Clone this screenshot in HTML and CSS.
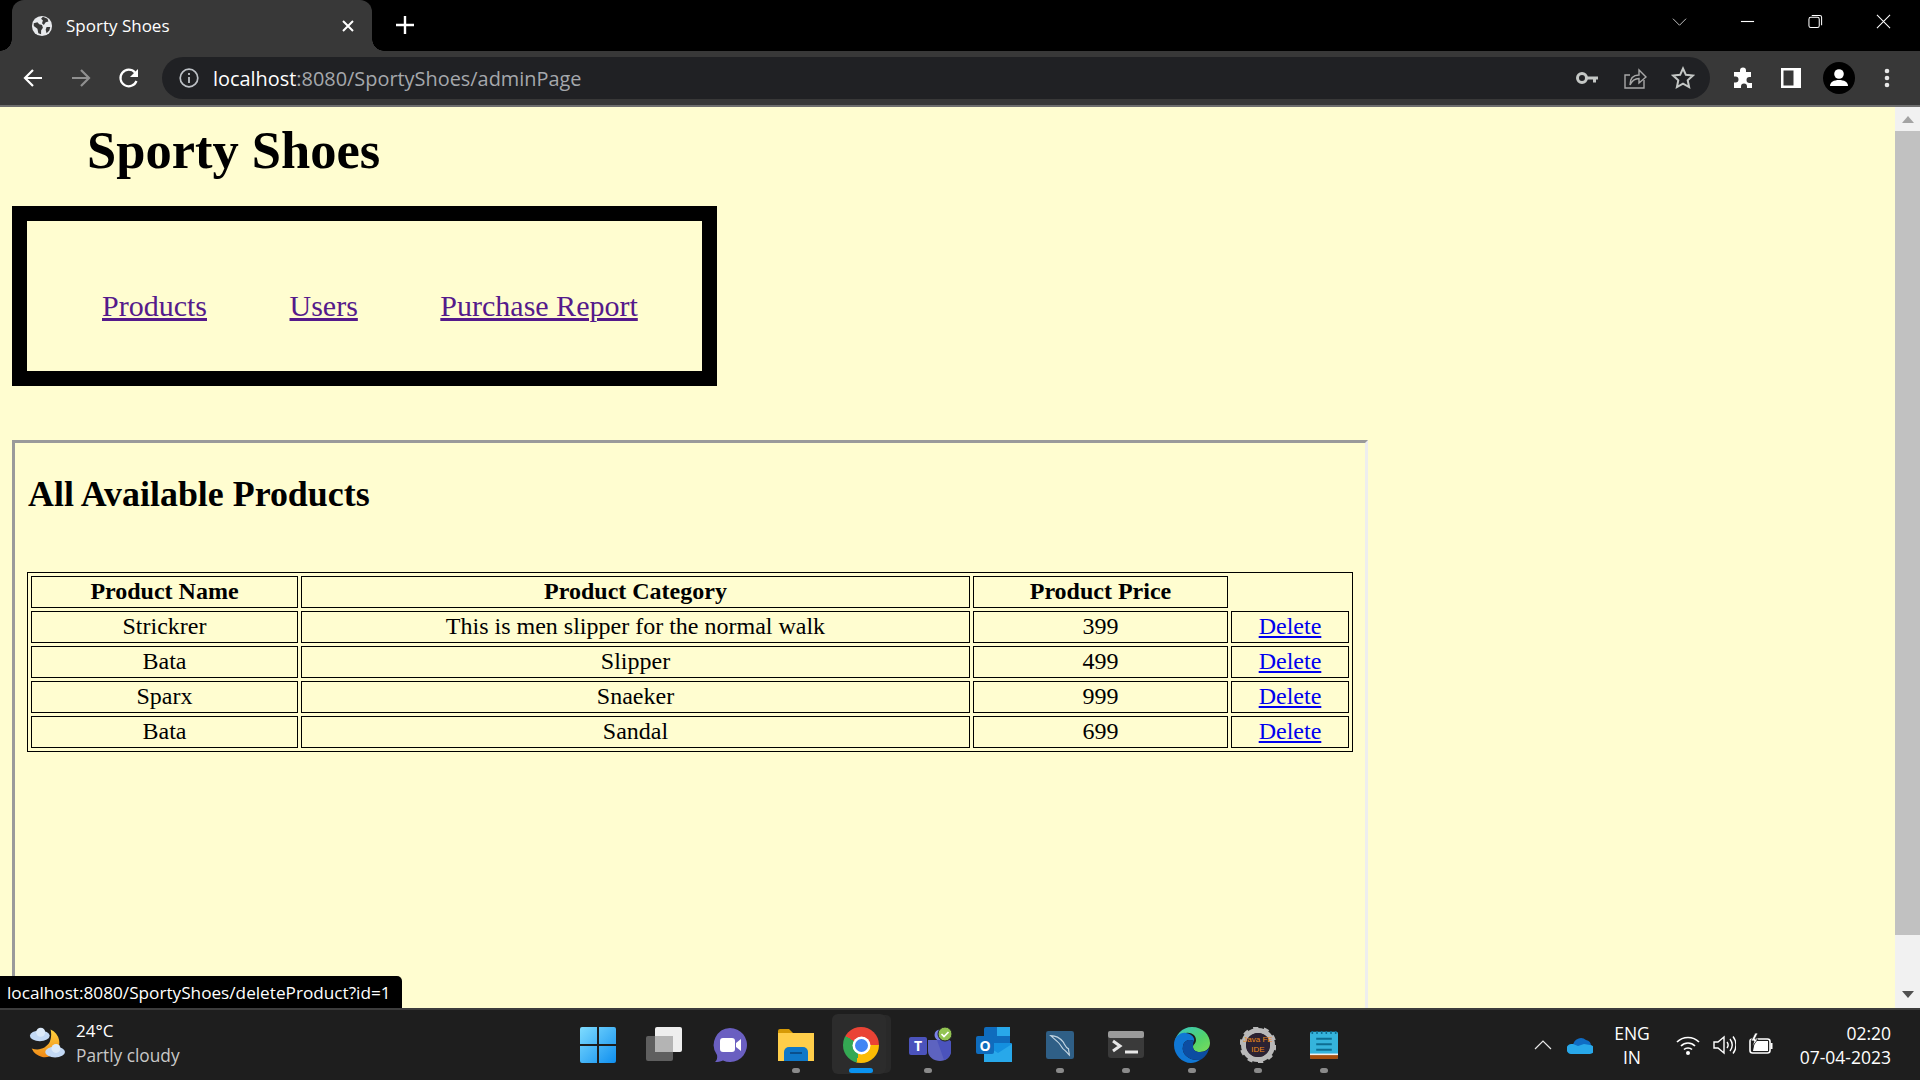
FILE: index.html
```html
<!DOCTYPE html>
<html lang="en">
<head>
    <meta charset="UTF-8">
    <title>Sporty Shoes</title>
    <link rel="stylesheet" href="styles.css">
</head>
<body>
    <div class="tabstrip">
        <div class="tab">
            <svg class="favicon" viewBox="0 0 24 24"><circle cx="12" cy="12" r="11" fill="#e8eaed"/><path d="M3 9l4-1 2 2 3 1 1 3-2 3 0 4-3-1-1-5-4-3zM13 2l5 2 1 3-3 1-2 3-2-2 1-3-2-2zM17 13l4 0-1 4-3 3-1-4z" fill="#383838"/></svg>
            <span class="tab-title">Sporty Shoes</span>
            <svg class="tab-close" viewBox="0 0 14 14"><path d="M2 2l10 10M12 2L2 12" stroke="#fff" stroke-width="2"/></svg>
        </div>
        <svg class="new-tab" viewBox="0 0 20 20"><path d="M10 1v18M1 10h18" stroke="#fff" stroke-width="2.4"/></svg>
        <div class="window-btns">
            <svg viewBox="0 0 16 16"><path d="M1 5l7 7 7-7" fill="none" stroke="#ccc" stroke-width="1"/></svg>
            <svg viewBox="0 0 16 16"><path d="M1 8h14" stroke="#fff" stroke-width="1.2"/></svg>
            <svg viewBox="0 0 16 16"><rect x="1" y="3.5" width="11" height="11" rx="2" fill="none" stroke="#fff" stroke-width="1.1"/><path d="M4 1.5h8.500a2 2 0 0 1 2 2v8.500" fill="none" stroke="#fff" stroke-width="1.1"/></svg>
            <svg viewBox="0 0 16 16"><path d="M1 1l14 14M15 1L1 15" stroke="#fff" stroke-width="1.1"/></svg>
        </div>
    </div>

    <div class="toolbar">
        <svg class="nav-icon" viewBox="0 0 24 24"><path d="M21 12H4M12 4l-8 8 8 8" fill="none" stroke="#fff" stroke-width="2.2"/></svg>
        <svg class="nav-icon" viewBox="0 0 24 24"><path d="M3 12h17M12 4l8 8-8 8" fill="none" stroke="#909090" stroke-width="2.200"/></svg>
        <svg class="nav-icon" viewBox="0 0 24 24"><path d="M19.500 15a8.300 8.300 0 1 1-1.500-8.500" fill="none" stroke="#fff" stroke-width="2.2"/><path d="M21 3v8h-8z" fill="#fff"/></svg>
        <div class="omnibox">
            <svg class="info-icon" viewBox="0 0 20 20"><circle cx="10" cy="10" r="8.800" fill="none" stroke="#bdc1c6" stroke-width="1.700"/><path d="M10 9v6M10 5v2" stroke="#bdc1c6" stroke-width="1.800"/></svg>
            <span class="url"><b>localhost</b>:8080/SportyShoes/adminPage</span>
            <svg class="omni-icon" viewBox="0 0 24 24"><circle cx="7" cy="12" r="4.500" fill="none" stroke="#c4c7c5" stroke-width="3"/><path d="M11 10.500h12v3h-2v3h-3v-3h-7z" fill="#c4c7c5"/></svg>
            <svg class="omni-icon" viewBox="0 0 24 24"><path d="M21 14v8H2V9h5" fill="none" stroke="#a8a8a8" stroke-width="1.400"/><path d="M7 19c0-7 4-10 9-10V4l7 7-7 6v-4.500c-4 0-7 2-9 6.500z" fill="none" stroke="#a8a8a8" stroke-width="1.400"/></svg>
            <svg class="omni-icon" viewBox="0 0 24 24"><path d="M12 2.500l2.900 6.300 6.900.8-5.100 4.700 1.400 6.800-6.100-3.400-6.100 3.400 1.400-6.800-5.100-4.700 6.900-.8z" fill="none" stroke="#c4c7c5" stroke-width="2"/></svg>
        </div>
        <div class="toolbar-right">
            <svg viewBox="0 0 24 24"><path d="M9 4.500a3 3 0 0 1 6 0V6h5v5h-1.500a3 3 0 0 0 0 6H21v5h-5v-1.500a3 3 0 0 0-6 0V22H3v-5.500h1.500a3 3 0 0 0 0-6H3V6h6z" fill="#fff"/></svg>
            <svg viewBox="0 0 24 24"><rect x="2" y="2" width="20" height="20" fill="#fff"/><rect x="4.500" y="4.500" width="10" height="15" fill="#383838"/></svg>
            <svg class="avatar" viewBox="0 0 32 32"><circle cx="16" cy="16" r="16" fill="#000"/><circle cx="16" cy="12" r="4.800" fill="#fff"/><path d="M7 24c0-4 4-6 9-6s9 2 9 6z" fill="#fff"/></svg>
            <svg viewBox="0 0 24 24"><circle cx="12" cy="5" r="2.300" fill="#e8e8e8"/><circle cx="12" cy="12" r="2.300" fill="#e8e8e8"/><circle cx="12" cy="19" r="2.300" fill="#e8e8e8"/></svg>
        </div>
    </div>

    <div class="viewport">
        <div class="page">
            <h1>Sporty Shoes</h1>
            <nav class="admin-nav">
                <a href="#">Products</a>
                <a href="#">Users</a>
                <a href="#">Purchase Report</a>
            </nav>
            <section class="panel">
                <h2>All Available Products</h2>
                <table class="products">
                    <colgroup>
                        <col class="col-name">
                        <col class="col-category">
                        <col class="col-price">
                        <col class="col-action">
                    </colgroup>
                    <tr>
                        <th>Product Name</th>
                        <th>Product Category</th>
                        <th>Product Price</th>
                        <th></th>
                    </tr>
                    <tr>
                        <td>Strickrer</td>
                        <td>This is men slipper for the normal walk</td>
                        <td>399</td>
                        <td><a href="#">Delete</a></td>
                    </tr>
                    <tr>
                        <td>Bata</td>
                        <td>Slipper</td>
                        <td>499</td>
                        <td><a href="#">Delete</a></td>
                    </tr>
                    <tr>
                        <td>Sparx</td>
                        <td>Snaeker</td>
                        <td>999</td>
                        <td><a href="#">Delete</a></td>
                    </tr>
                    <tr>
                        <td>Bata</td>
                        <td>Sandal</td>
                        <td>699</td>
                        <td><a href="#">Delete</a></td>
                    </tr>
                </table>
            </section>
        </div>
        <div class="scrollbar">
            <div class="arrow-up"></div>
            <div class="thumb"></div>
            <div class="arrow-down"></div>
        </div>
        <div class="status-bubble">localhost:8080/SportyShoes/deleteProduct?id=1</div>
    </div>

    <div class="taskbar">
        <div class="weather">
            <svg viewBox="0 0 40 40">
                <defs><linearGradient id="moon" x1="0" y1="0" x2="0" y2="1"><stop offset="0" stop-color="#ffd23f"/><stop offset="1" stop-color="#f08a17"/></linearGradient></defs>
                <path d="M24 5a16 16 0 1 1-21 21c8 3 16 0 20-7 2-5 2-10 1-14z" fill="url(#moon)"/>
                <ellipse cx="12" cy="12" rx="11" ry="6" fill="#c3d9f5"/>
                <circle cx="13" cy="8" r="5" fill="#dceafa"/>
                <ellipse cx="29" cy="30" rx="11" ry="6" fill="#c3d9f5"/>
                <circle cx="30" cy="26" r="5" fill="#dceafa"/>
            </svg>
            <div class="weather-text">
                <span class="temp">24°C</span>
                <span class="cond">Partly cloudy</span>
            </div>
        </div>

        <div class="task-icons">
            <div class="task-item">
                <svg viewBox="0 0 36 36">
                    <defs><linearGradient id="win" x1="0" y1="0" x2="1" y2="1"><stop offset="0" stop-color="#7fdcff"/><stop offset="1" stop-color="#0f8fef"/></linearGradient></defs>
                    <path d="M2 0h15v17H0V2a2 2 0 0 1 2-2zM19 0h15a2 2 0 0 1 2 2v15H19zM0 19h17v17H2a2 2 0 0 1-2-2zM19 19h17v15a2 2 0 0 1-2 2H19z" fill="url(#win)"/>
                </svg>
            </div>
            <div class="task-item">
                <svg viewBox="0 0 36 36"><rect y="9" width="27" height="25" rx="2" fill="#5f5f5f"/><rect x="9" y="0" width="27" height="25" rx="2" fill="#eeeeee"/><rect x="9" y="9" width="18" height="16" fill="#b4b4b4"/></svg>
            </div>
            <div class="task-item">
                <svg viewBox="0 0 36 36"><path d="M18 1a17 17 0 1 1-7 32.500c-3 1-5 1.500-8 1.500 2-2 2.500-4 2-7A17 17 0 0 1 18 1z" fill="#6a5fc1"/><rect x="8" y="11" width="15" height="14" rx="3" fill="#fff"/><path d="M24 16l5-4v12l-5-4z" fill="#fff"/></svg>
            </div>
            <div class="task-item has-dot">
                <svg viewBox="0 0 36 36"><path d="M0 4a2 2 0 0 1 2-2h9l4 4h-15z" fill="#d69a06"/><path d="M0 6h36v28H0z" fill="#ffce4a"/><path d="M6 34v-9a5 5 0 0 1 5-5h14a5 5 0 0 1 5 5v9z" fill="#0f78c8"/><path d="M12 26h12" stroke="#0a4f8c" stroke-width="2"/></svg>
            </div>
            <div class="task-item active">
                <div class="chrome-logo"><div class="chrome-center"></div></div>
            </div>
            <div class="task-item has-dot">
                <svg viewBox="0 0 44 36" class="wide">
                    <circle cx="31" cy="8" r="5.500" fill="#7b83eb"/>
                    <path d="M19 13h20a3 3 0 0 1 3 3v8c0 6-5 10-11 10s-12-4-12-10z" fill="#5d63c0"/>
                    <path d="M28 13h11a3 3 0 0 1 3 3v8c0 4-3 8-7 9z" fill="#4b53bc"/>
                    <rect y="10" width="18" height="18" rx="2" fill="#4b53bc"/>
                    <text x="9" y="24" class="teams-t">T</text>
                    <circle cx="36" cy="7" r="7" fill="#92c353" stroke="#1f1f1f" stroke-width="1"/>
                    <path d="M32.500 7l2.500 2.500 4.500-4.500" fill="none" stroke="#fff" stroke-width="1.700"/>
                </svg>
            </div>
            <div class="task-item">
                <svg viewBox="0 0 36 36">
                    <rect x="8" y="0" width="26" height="18" rx="2" fill="#0f6cbd"/>
                    <rect x="21" y="0" width="13" height="9" fill="#28a8ea"/>
                    <rect x="8" y="16" width="28" height="19" rx="1" fill="#1490df"/>
                    <path d="M8 17l14 9 14-9v18H8z" fill="#28a8ea"/>
                    <rect y="9" width="18" height="18" rx="2" fill="#0f6cbd"/>
                    <text x="9" y="23.500" class="outlook-o">O</text>
                </svg>
            </div>
            <div class="task-item has-dot">
                <svg viewBox="0 0 36 36" class="narrow"><rect width="36" height="36" rx="3" fill="#2f5f86"/><path d="M6 6c6 0 12 3 16 8 2 3 3 7 7 9 0 3 1 5 1 8-3-3-5-6-8-8-2-2-4-7-7-9l-9-8z" fill="none" stroke="#c3d5e2" stroke-width="1.500"/></svg>
            </div>
            <div class="task-item has-dot">
                <svg viewBox="0 0 36 27" class="terminal"><rect width="36" height="27" rx="3" fill="#3a3a3a"/><rect width="36" height="7" rx="2" fill="#9a9a9a"/><path d="M5 10l7 5-7 5" fill="none" stroke="#e8e8e8" stroke-width="3"/><path d="M17 21h13" stroke="#e8e8e8" stroke-width="3"/></svg>
            </div>
            <div class="task-item has-dot">
                <svg viewBox="0 0 36 36">
                    <defs><linearGradient id="edge" x1="0" y1="0" x2="1" y2="1"><stop offset="0" stop-color="#36c5c9"/><stop offset=".6" stop-color="#52d36b"/><stop offset="1" stop-color="#7bdc5a"/></linearGradient></defs>
                    <path d="M18 0c11 0 18 8 18 16 0 6-5 9-10 9-4 0-7-2-7-5 0-3 3-3 3-7 0-5-5-8-10-7C5 7 0 12 0 18 1 8 8 0 18 0z" fill="url(#edge)"/>
                    <path d="M0 18C0 9 7 5 12 6c6 1 9 5 8 8-4-2-10-1-11 5-2 8 6 15 17 14-3 2-6 3-9 3C8 36 0 28 0 18z" fill="#1077d4"/>
                    <path d="M9 19c1-6 7-7 11-5-1 2-1 4-1 6 0 3 3 5 7 5 3 0 7-1 9-4-1 6-5 10-9 12C15 34 7 27 9 19z" fill="#0c4da2"/>
                </svg>
            </div>
            <div class="task-item has-dot">
                <svg viewBox="0 0 36 36">
                    <circle cx="18" cy="18" r="14.500" fill="none" stroke="#b9b9b9" stroke-width="5"/>
                    <circle cx="18" cy="18" r="16.500" fill="none" stroke="#b9b9b9" stroke-width="4" stroke-dasharray="5 5.370"/>
                    <circle cx="18" cy="18" r="12" fill="#2b2233"/>
                    <text x="18" y="15" class="gear-top">Java FE</text>
                    <text x="18" y="25" class="gear-bottom">IDE</text>
                </svg>
            </div>
            <div class="task-item has-dot">
                <svg viewBox="0 0 36 36" class="narrow">
                    <rect y="1" width="36" height="35" rx="2" fill="#35b4dc"/>
                    <path d="M0 30h36v4a2 2 0 0 1-2 2H2a2 2 0 0 1-2-2z" fill="#a8500f"/>
                    <rect y="29" width="36" height="2" fill="#f0f0f0"/>
                    <path d="M8 10h20M8 17h20M8 24h20" stroke="#0d6d92" stroke-width="2.500"/>
                    <path d="M3 4v-4M9 4v-4M15 4v-4M21 4v-4M27 4v-4M33 4v-4" stroke="#0d6d92" stroke-width="2"/>
                </svg>
            </div>
        </div>

        <div class="tray">
            <svg class="tray-caret" viewBox="0 0 18 10"><path d="M1 9l8-8 8 8" fill="none" stroke="#e8e8e8" stroke-width="1.200"/></svg>
            <svg class="tray-cloud" viewBox="0 0 26 18"><path d="M6 9a8 8 0 0 1 13-5 6 6 0 0 1 5 6l-8 4z" fill="#0f6cc4"/><path d="M5 18a5 5 0 0 1-1-10l2 0 5 2 6-2 6 1a4.500 4.500 0 0 1 0 9z" fill="#28a8ea"/></svg>
            <div class="lang"><span>ENG</span><span>IN</span></div>
            <svg class="tray-wifi" viewBox="0 0 24 24"><path d="M1 9c6-6 16-6 22 0M5 13c4-4 10-4 14 0M8 16.500c2-2 6-2 8 0" fill="none" stroke="#fff" stroke-width="1.700"/><circle cx="12" cy="20" r="2" fill="#fff"/></svg>
            <svg class="tray-volume" viewBox="0 0 24 24"><path d="M2 9h4l6-5v16l-6-5H2z" fill="none" stroke="#fff" stroke-width="1.400"/><path d="M15 9c1.500 2 1.500 4 0 6M18 6c3 4 3 8 0 12M21 3.500c4 5 4 12 0 17" fill="none" stroke="#fff" stroke-width="1.400"/></svg>
            <svg class="tray-battery" viewBox="0 0 26 24"><rect x="2" y="6" width="20" height="14" rx="2.500" fill="none" stroke="#fff" stroke-width="1.600"/><path d="M23.500 10v6" stroke="#fff" stroke-width="2"/><path d="M7 8h13v10H5z" fill="#fff"/><path d="M7 0L3 8h3l-2 6 6-8H7l3-6z" fill="#fff" stroke="#1e1e1e" stroke-width=".8"/></svg>
            <div class="clock"><span>02:20</span><span>07-04-2023</span></div>
        </div>
    </div>
</body>
</html>
```

FILE: styles.css
```css
* {
    box-sizing: border-box;
}
body {
    margin: 0;
    width: 1920px;
    height: 1080px;
    overflow: hidden;
    display: flex;
    flex-direction: column;
    font-family: "Open Sans", sans-serif;
}

/* tab strip */
.tabstrip {
    height: 51px;
    background: #000;
    display: flex;
    align-items: flex-end;
    flex-shrink: 0;
}
.tab {
    position: relative;
    width: 360px;
    height: 51px;
    margin-left: 12px;
    padding: 0 17px 0 19px;
    background: #383838;
    border-radius: 12px 12px 0 0;
    display: flex;
    align-items: center;
    color: #fff;
}
.tab::before,
.tab::after {
    content: "";
    position: absolute;
    bottom: 0;
    width: 12px;
    height: 12px;
}
.tab::before {
    left: -12px;
    background: radial-gradient(circle at 0 0, #000 11.500px, #383838 12px);
}
.tab::after {
    right: -12px;
    background: radial-gradient(circle at 100% 0, #000 11.500px, #383838 12px);
}
.favicon {
    width: 22px;
    height: 22px;
}
.tab-title {
    margin-left: 13px;
    font-size: 17px;
    flex: 1;
}
.tab-close {
    width: 14px;
    height: 14px;
}
.new-tab {
    width: 20px;
    height: 20px;
    margin: 0 0 16px 23px;
}
.window-btns {
    margin-left: auto;
    width: 252px;
    height: 51px;
    padding: 0 0 9px 0;
    display: flex;
    align-items: center;
}
.window-btns svg {
    width: 15px;
    height: 15px;
    margin-left: 53px;
}
.window-btns svg:first-child {
    margin-left: 4px;
}

/* toolbar */
.toolbar {
    height: 56px;
    flex-shrink: 0;
    background: #383838;
    border-bottom: 2px solid #6e6e6e;
    display: flex;
    align-items: center;
    padding: 0 0 0 21px;
}
.nav-icon {
    width: 24px;
    height: 24px;
    margin-right: 24px;
}
.omnibox {
    width: 1548px;
    height: 42px;
    margin-left: -3px;
    background: #202124;
    border-radius: 21px;
    display: flex;
    align-items: center;
    padding: 0 15px 0 17px;
}
.info-icon {
    width: 20px;
    height: 20px;
}
.url {
    margin-left: 14px;
    flex: 1;
    font-size: 19.900px;
    color: #a5a8ac;
}
.url b {
    font-weight: 400;
    color: #fff;
}
.omni-icon {
    width: 24px;
    height: 24px;
    margin-left: 24px;
}
.toolbar-right {
    display: flex;
    align-items: center;
    margin-left: 21px;
}
.toolbar-right svg {
    width: 24px;
    height: 24px;
    margin-right: 24px;
}
.toolbar-right svg:last-child {
    margin-right: 0;
}
.toolbar-right .avatar {
    width: 32px;
    height: 32px;
    margin: 0 20px 0 -4px;
}

/* page area */
.viewport {
    position: relative;
    flex: 1;
    min-height: 0;
    display: flex;
    background: #fffdd0;
}
.page {
    flex: 1;
    min-width: 0;
    overflow: hidden;
    font-family: "Liberation Serif", serif;
    color: #000;
}
h1 {
    margin: 13px 0 0 87px;
    font-size: 52.500px;
    line-height: 60px;
}
.admin-nav {
    width: 705px;
    height: 180px;
    margin: 26px 0 0 12px;
    border: 15px solid #000;
    padding: 68px 0 0 75px;
    display: flex;
    gap: 82.500px;
    font-size: 30px;
    line-height: 34px;
}
.admin-nav a {
    color: #551a8b;
}
.panel {
    width: 1356px;
    height: 700px;
    margin: 54px 0 0 12px;
    border-style: solid;
    border-width: 3px;
    border-color: #9a9a9a #eeeeee #eeeeee #9a9a9a;
    padding: 32px 12px 0;
}
h2 {
    margin: 0 0 0 1px;
    font-size: 35.900px;
    line-height: 39px;
}
.products {
    width: 1326px;
    margin-top: 58px;
    table-layout: fixed;
    border: 1px solid #000;
    border-spacing: 3px;
    empty-cells: hide;
    font-size: 24px;
}
.col-name { width: 267px; }
.col-category { width: 669px; }
.col-price { width: 255px; }
.col-action { width: 118px; }
.products th,
.products td {
    height: 32px;
    padding: 0 0 2px;
    border: 1px solid #000;
    text-align: center;
    line-height: 28px;
}
.products a {
    color: #0000ee;
}

/* scrollbar */
.scrollbar {
    width: 25px;
    flex-shrink: 0;
    background: #f1f1f1;
    display: flex;
    flex-direction: column;
    align-items: center;
}
.arrow-up {
    margin: 9px 0 8px;
    border: 6px solid transparent;
    border-top: 0;
    border-bottom: 7px solid #a3a3a3;
    width: 12px;
    box-sizing: border-box;
}
.thumb {
    width: 100%;
    height: 804px;
    background: #c1c1c1;
}
.arrow-down {
    margin-top: 56px;
    border: 6px solid transparent;
    border-bottom: 0;
    border-top: 7px solid #505050;
}
.status-bubble {
    position: absolute;
    left: 0;
    bottom: 0;
    width: 402px;
    height: 32px;
    padding-left: 7px;
    background: #000;
    color: #fff;
    border-radius: 0 5px 0 0;
    font-size: 17.200px;
    line-height: 33px;
    white-space: nowrap;
}

/* taskbar */
.taskbar {
    height: 72px;
    flex-shrink: 0;
    background: #1e1e1e;
    border-top: 2px solid #3c3c3c;
    display: flex;
    color: #fff;
}
.weather {
    width: 565px;
    flex-shrink: 0;
    display: flex;
    align-items: center;
    padding-left: 28px;
}
.weather svg {
    width: 38px;
    height: 36px;
    margin-bottom: 4px;
}
.weather-text {
    margin: 0 0 4px 10px;
    display: flex;
    flex-direction: column;
}
.temp {
    font-size: 17px;
    line-height: 24px;
}
.cond {
    font-size: 17.300px;
    line-height: 25px;
    color: #c8c8c8;
}
.task-icons {
    display: flex;
}
.task-item {
    position: relative;
    width: 66px;
    display: flex;
    justify-content: center;
    padding-top: 17px;
}
.task-item svg {
    width: 36px;
    height: 36px;
}
.task-item svg.wide {
    width: 44px;
    margin-left: 6px;
}
.task-item svg.narrow {
    width: 28px;
}
.task-item svg.terminal {
    height: 27px;
    margin-top: 4px;
}
.has-dot::after {
    content: "";
    position: absolute;
    left: 29px;
    top: 58px;
    width: 8px;
    height: 5px;
    border-radius: 3px;
    background: #8a8a8a;
}
.active::before {
    content: "";
    position: absolute;
    left: 3px;
    top: 4px;
    width: 54px;
    height: 60px;
    border-radius: 6px;
    background: #2c2c2c;
    box-shadow: 6px 0 0 -1px #292929;
}
.active::after {
    content: "";
    position: absolute;
    left: 20px;
    top: 58px;
    width: 24px;
    height: 5px;
    border-radius: 3px;
    background: #0a93f0;
}
.chrome-logo {
    position: relative;
    left: -1px;
    width: 36px;
    height: 36px;
    border-radius: 50%;
    background: conic-gradient(from 300deg, #ea4335 0 150deg, #fbbc04 150deg 255deg, #34a853 255deg 360deg);
    display: flex;
    align-items: center;
    justify-content: center;
}
.chrome-center {
    width: 17px;
    height: 17px;
    border-radius: 50%;
    background: #4285f4;
    border: 2.500px solid #fff;
    box-shadow: 0 0 0 .5px #fff;
}
.teams-t,
.outlook-o {
    fill: #fff;
    font-family: "Open Sans", sans-serif;
    font-size: 14px;
    font-weight: 700;
    text-anchor: middle;
}
.gear-top,
.gear-bottom {
    fill: #f08a17;
    font-family: "Liberation Sans", sans-serif;
    font-size: 8px;
    text-anchor: middle;
}
.tray {
    margin-left: auto;
    display: flex;
    align-items: center;
    padding-right: 29px;
}
.tray-caret {
    width: 18px;
    height: 10px;
}
.tray-cloud {
    width: 26px;
    height: 18px;
    margin-left: 15px;
}
.lang {
    width: 48px;
    margin-left: 15px;
    display: flex;
    flex-direction: column;
    align-items: center;
    font-size: 17.500px;
    line-height: 24px;
}
.tray-wifi {
    width: 24px;
    height: 24px;
    margin-left: 20px;
}
.tray-volume {
    width: 24px;
    height: 24px;
    margin-left: 12px;
}
.tray-battery {
    width: 26px;
    height: 24px;
    margin-left: 12px;
}
.clock {
    width: 117px;
    display: flex;
    flex-direction: column;
    align-items: flex-end;
    font-size: 17.500px;
    line-height: 24px;
}
```
